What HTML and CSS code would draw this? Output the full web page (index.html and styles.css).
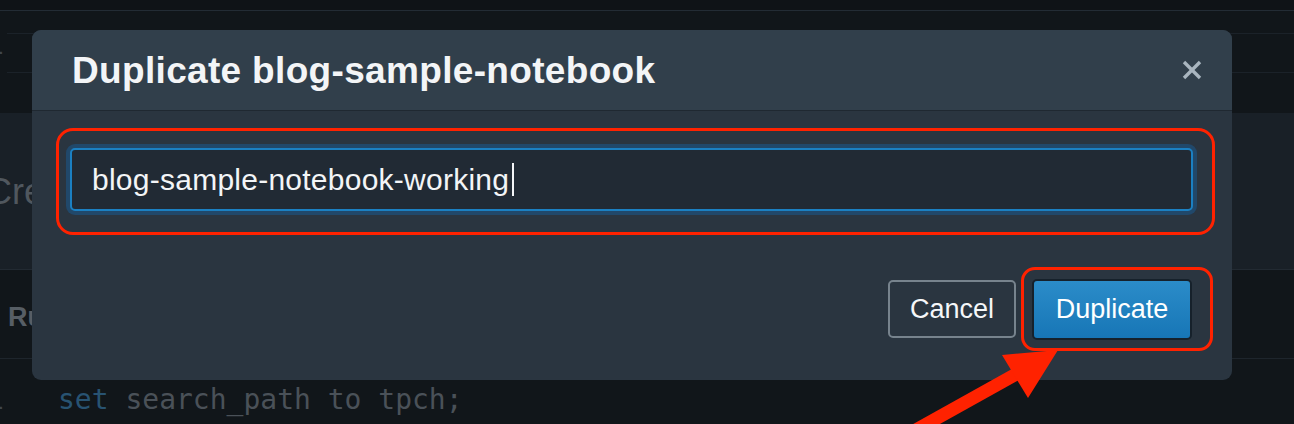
FILE: index.html
```html
<!DOCTYPE html>
<html lang="en">
<head>
    <meta charset="UTF-8">
    <meta name="viewport" content="width=device-width, initial-scale=1.0">
    <title>Duplicate notebook</title>
    <link rel="stylesheet" href="styles.css">
</head>
<body>
    <!-- editor behind the dialog -->
    <div class="editor">
        <div class="topbar"></div>
        <div class="cell-head">
            <span class="line-no">1</span>
            <div class="rule-right"></div>
        </div>
        <div class="cell-band">
            <span class="band-title">Create</span>
        </div>
        <div class="toolbar">
            <span class="run-label">Run</span>
        </div>
        <div class="code-line">
            <span class="line-no">1</span>
            <code class="code"><span class="kw">set</span> search_path to tpch;</code>
        </div>
    </div>

    <div class="modal">
        <div class="modal-header">
            <h1 class="modal-title">Duplicate blog-sample-notebook</h1>
            <button class="close-btn" title="Close">
                <svg xmlns="http://www.w3.org/2000/svg" viewBox="0 0 20 20" fill="none" stroke="currentColor" stroke-width="3.4">
                    <path d="M2 2L18 18"></path>
                    <path d="M18 2L2 18"></path>
                </svg>
            </button>
        </div>
        <div class="modal-body">
            <div class="mark mark-input">
                <div class="text-input">
                    <span class="value">blog-sample-notebook-working</span><span class="caret"></span>
                </div>
            </div>
            <div class="modal-footer">
                <button class="btn btn-cancel">Cancel</button>
                <div class="mark mark-btn">
                    <button class="btn btn-primary">Duplicate</button>
                </div>
            </div>
        </div>
    </div>

    <svg class="arrow" xmlns="http://www.w3.org/2000/svg" viewBox="0 0 1294 424">
        <line x1="1020" y1="372" x2="905" y2="436" stroke="#ff2200" stroke-width="13"></line>
        <polygon points="1058,350 1002,355 1028,398" fill="#ff2200"></polygon>
    </svg>
</body>
</html>
```

FILE: styles.css
```css
:root {
    --page-bg: #11161a;
    --band-bg: #192027;
    --header-bg: #313f4b;
    --body-bg: #2a3540;
    --divider: #1f2831;
    --mark: #ff2200;
    --text: #f3f5f7;
    --font-main: 'Liberation Sans', Arial, sans-serif;
    --font-mono: 'DejaVu Sans Mono', 'Liberation Mono', monospace;
}

* {
    margin: 0;
    padding: 0;
    box-sizing: border-box;
}

body {
    width: 1294px;
    height: 424px;
    overflow: hidden;
    position: relative;
    background-color: var(--page-bg);
    font-family: var(--font-main);
    color: var(--text);
}

/* background editor */
.editor {
    display: flex;
    flex-direction: column;
    height: 100%;
}

.topbar {
    height: 11px;
    background-color: #0f1317;
    border-bottom: 1px solid #232c35;
}

.cell-head {
    height: 102px;
    display: flex;
    align-items: center;
}

.cell-head .line-no {
    margin-top: -36px;
}

.rule-right {
    flex: 1;
    align-self: stretch;
    border-top: 1px solid #1b2229;
    border-bottom: 1px solid #1b2229;
    margin: 22px 0 40px;
}

.line-no {
    font-family: var(--font-mono);
    font-size: 28px;
    color: #3f464d;
    margin-left: -13px;
    width: 20px;
}

.cell-band {
    height: 157px;
    background-color: var(--band-bg);
    border-bottom: 1px solid #222a32;
    display: flex;
    align-items: center;
}

.band-title {
    font-size: 36px;
    color: #50575e;
    margin-left: -14px;
    margin-top: 2px;
}

.toolbar {
    height: 89px;
    border-bottom: 1px solid #1e252c;
    display: flex;
    align-items: center;
}

.run-label {
    font-size: 27px;
    font-weight: bold;
    color: #575e65;
    margin-left: 8px;
    margin-top: 6px;
}

.code-line {
    flex: 1;
    display: flex;
    align-items: center;
    padding-top: 16px;
}

.code-line .line-no {
    margin-right: 51px;
}

.code {
    font-family: var(--font-mono);
    font-size: 28px;
    color: #4a5158;
}

.code .kw {
    color: #285372;
}

/* dialog */
.modal {
    position: absolute;
    left: 32px;
    top: 30px;
    width: 1200px;
    border-radius: 9px;
    overflow: hidden;
    background-color: var(--body-bg);
}

.modal-header {
    height: 81px;
    background-color: var(--header-bg);
    border-bottom: 1px solid var(--divider);
    display: flex;
    align-items: center;
    justify-content: space-between;
    padding: 0 30px 0 40px;
}

.modal-title {
    font-size: 37px;
    font-weight: bold;
    line-height: 1;
    letter-spacing: 0.33px;
    color: var(--text);
}

.close-btn {
    background: none;
    border: none;
    color: #a9b5bf;
    display: flex;
}

.close-btn svg {
    width: 20px;
    height: 20px;
}

.modal-body {
    padding: 17px 17px 29px 24px;
}

.mark {
    border: 3px solid var(--mark);
}

.mark-input {
    border-radius: 17px;
    padding: 17px 19px 21px 11px;
}

.text-input {
    height: 63px;
    background-color: #212a34;
    border: 2px solid #1b80c2;
    border-radius: 5px;
    box-shadow: 0 0 0 4px #21486a;
    display: flex;
    align-items: center;
    padding-left: 20px;
    font-size: 30px;
    letter-spacing: 0.25px;
    color: var(--text);
}

.caret {
    width: 2px;
    height: 33px;
    background-color: #f3f5f7;
    margin-left: 3px;
}

.modal-footer {
    margin-top: 32px;
    margin-right: 2px;
    display: flex;
    justify-content: flex-end;
    align-items: center;
    gap: 5px;
}

.mark-btn {
    border-radius: 14px;
    padding: 9px 18px 8px 8px;
}

.btn {
    font-family: var(--font-main);
    font-size: 27px;
    color: #f5f7f9;
    border-radius: 5px;
    cursor: pointer;
}

.btn-cancel {
    width: 128px;
    height: 58px;
    background: transparent;
    border: 2px solid #77838d;
}

.btn-primary {
    width: 160px;
    height: 61px;
    background: linear-gradient(#2b8cc9, #1776b6);
    border: 2px solid #16212b;
    color: #fff;
}

.arrow {
    position: absolute;
    left: 0;
    top: 0;
    width: 1294px;
    height: 424px;
    pointer-events: none;
}
```
